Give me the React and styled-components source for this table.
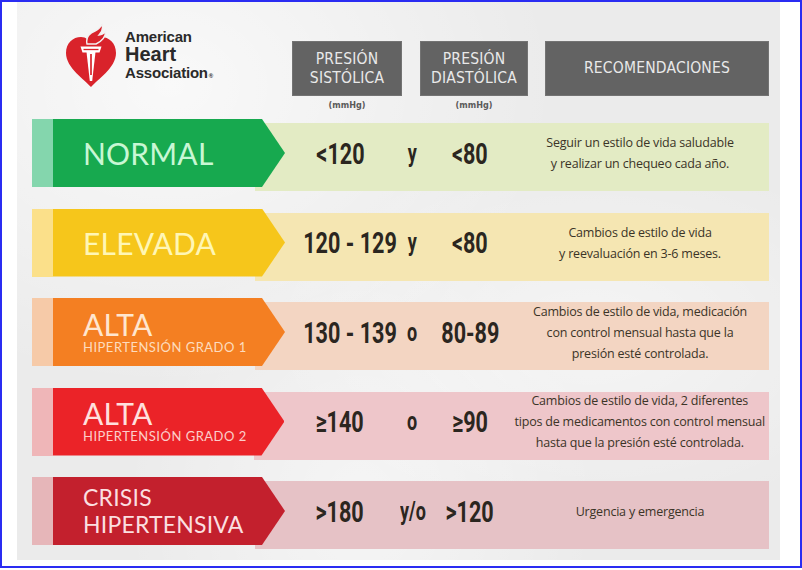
import React from 'react'
import styled, { createGlobalStyle } from 'styled-components';

const GlobalStyle = createGlobalStyle`
    html, body {
        margin: 0;
        padding: 0;
        background: #ffffff;
    }
    * {
        box-sizing: border-box;
    }
`;

const rows = [
    {
        title: ['NORMAL'], sub: null, size: 30,
        strip: '#84d6ad', main: '#17a94f', band: '#e3ebc4', ink: '#c8f7d4',
        sys: '<120', conn: 'y', dia: '<80',
        rec: ['Seguir un estilo de vida saludable', 'y realizar un chequeo cada año.'],
    },
    {
        title: ['ELEVADA'], sub: null, size: 30,
        strip: '#fbe08a', main: '#f6c61b', band: '#f5e6b2', ink: '#fff6b5',
        sys: '120 - 129', conn: 'y', dia: '<80',
        rec: ['Cambios de estilo de vida', 'y reevaluación en 3-6 meses.'],
    },
    {
        title: ['ALTA'], sub: 'HIPERTENSIÓN GRADO 1', size: 30,
        strip: '#f6caa8', main: '#f47f22', band: '#f3d5c2', ink: '#ffe6cf',
        sys: '130 - 139', conn: 'o', dia: '80-89',
        rec: ['Cambios de estilo de vida, medicación', 'con control mensual hasta que la', 'presión esté controlada.'],
    },
    {
        title: ['ALTA'], sub: 'HIPERTENSIÓN GRADO 2', size: 30,
        strip: '#efb6b8', main: '#eb2328', band: '#eec6ca', ink: '#ffe0dd',
        sys: '≥140', conn: 'o', dia: '≥90',
        rec: ['Cambios de estilo de vida, 2 diferentes', 'tipos de medicamentos con control mensual', 'hasta que la presión esté controlada.'],
    },
    {
        title: ['CRISIS', 'HIPERTENSIVA'], sub: null, size: 23,
        strip: '#e6b6b9', main: '#c3202d', band: '#e6c2c6', ink: '#fbdfe0',
        sys: '>180', conn: 'y/o', dia: '>120',
        rec: ['Urgencia y emergencia'],
    },
];

const HeartLogo = () => (
    <svg width="56" height="66" viewBox="0 0 56 66">
        <path d="M28 64 C22 57 3 45 3 30 C3 20 10 14 18 14 C23 14 26.5 17 28 21 C29.5 17 33 14 38 14 C46 14 53 20 53 30 C53 45 34 57 28 64 Z" fill="#d9232b" />
        <path d="M24 21 C22.5 14 27 10 32 8 C34.5 7 37 5 39 1.5 C40.5 6 38.5 9.5 36 12 C39 12 41 10.5 42.5 8 C43 14 38 18.5 33 21 Z" fill="#d9232b" stroke="#f2f2f2" strokeWidth="1.4" />
        <polygon points="17.5,23.5 38.5,23.5 36.5,29.5 19.5,29.5" fill="#ffffff" />
        <polygon points="23.5,29 32.5,29 29.2,58 26.8,58" fill="#ffffff" />
        <line x1="20.5" y1="26.5" x2="35.5" y2="26.5" stroke="#d9232b" strokeWidth="1.3" />
        <line x1="28" y1="31" x2="28" y2="52" stroke="#d9232b" strokeWidth="1.7" />
    </svg>
);

const App = () => {
    return (
        <>
            <GlobalStyle />
            <StyledFrame>
                <StyledPaper>
                    <StyledHeader>
                        <StyledLogo>
                            <HeartLogo />
                            <StyledLogoText>
                                <span>American</span>
                                <strong>Heart</strong>
                                <span>Association<sup>®</sup></span>
                            </StyledLogoText>
                        </StyledLogo>
                        <StyledHeadCol width={110}>
                            <StyledHeadBox>PRESIÓN<br />SISTÓLICA</StyledHeadBox>
                            <StyledUnit>(mmHg)</StyledUnit>
                        </StyledHeadCol>
                        <StyledHeadCol width={108} gap={18}>
                            <StyledHeadBox>PRESIÓN<br />DIASTÓLICA</StyledHeadBox>
                            <StyledUnit>(mmHg)</StyledUnit>
                        </StyledHeadCol>
                        <StyledHeadCol width={224} gap={17}>
                            <StyledHeadBox>RECOMENDACIONES</StyledHeadBox>
                        </StyledHeadCol>
                    </StyledHeader>
                    <StyledRows>
                        {rows.map((row, i) => (
                            <StyledRow key={i}>
                                <StyledStrip color={row.strip} />
                                <StyledArrow color={row.main} ink={row.ink}>
                                    {row.title.map((t) => (
                                        <StyledTitle key={t} size={row.size}>{t}</StyledTitle>
                                    ))}
                                    {row.sub && <StyledSub>{row.sub}</StyledSub>}
                                </StyledArrow>
                                <StyledBand color={row.band}>
                                    <StyledSys><StyledValue>{row.sys}</StyledValue></StyledSys>
                                    <StyledConn><StyledValue small>{row.conn}</StyledValue></StyledConn>
                                    <StyledDia><StyledValue>{row.dia}</StyledValue></StyledDia>
                                    <StyledRec>
                                        {row.rec.map((line) => (
                                            <div key={line}>{line}</div>
                                        ))}
                                    </StyledRec>
                                </StyledBand>
                            </StyledRow>
                        ))}
                    </StyledRows>
                </StyledPaper>
            </StyledFrame>
        </>
    )
}

const StyledFrame = styled.div`
    width: 802px;
    height: 568px;
    border: 2px solid #2a2cf2;
    background: #ffffff;
    padding: 0 20px 6px 15px;
    display: flex;
`;
const StyledPaper = styled.div`
    flex: 1;
    display: flex;
    flex-direction: column;
    padding-left: 15px;
    background:
        radial-gradient(ellipse at 20% 15%, rgba(255,255,255,0.7), transparent 45%),
        radial-gradient(ellipse at 75% 60%, rgba(255,255,255,0.5), transparent 40%),
        radial-gradient(ellipse at 45% 90%, rgba(255,255,255,0.5), transparent 40%),
        #ebebeb;
`;
const StyledHeader = styled.div`
    display: flex;
    align-items: flex-start;
    height: 109px;
`;
const StyledLogo = styled.div`
    width: 260px;
    display: flex;
    align-items: flex-start;
    padding-left: 31px;
    margin-top: 21px;
`;
const StyledLogoText = styled.div`
    display: flex;
    flex-direction: column;
    margin-left: 6px;
    padding-top: 5px;
    font-family: "Liberation Sans", Arial, sans-serif;
    font-weight: 700;
    color: #2a2a2a;
    >span{
        font-size: 15px;
        line-height: 17px;
        letter-spacing: -0.2px;
    }
    >strong{
        font-size: 20px;
        line-height: 19px;
    }
    sup{
        font-size: 6px;
        vertical-align: baseline;
        margin-left: 1px;
    }
`;
const StyledHeadCol = styled.div`
    width: ${(p) => p.width}px;
    margin-left: ${(p) => p.gap || 0}px;
    margin-top: 39px;
    display: flex;
    flex-direction: column;
    align-items: center;
`;
const StyledHeadBox = styled.div`
    width: 100%;
    height: 55px;
    background: #636363;
    border: 1px solid #737373;
    color: #e9e9e9;
    display: flex;
    align-items: center;
    justify-content: center;
    text-align: center;
    font-family: "DejaVu Sans Condensed", "DejaVu Sans", sans-serif;
    font-stretch: condensed;
    font-size: 15.5px;
    line-height: 19px;
    letter-spacing: 0.2px;
`;
const StyledUnit = styled.div`
    margin-top: 3px;
    font-family: "DejaVu Sans Condensed", "DejaVu Sans", sans-serif;
    font-stretch: condensed;
    font-weight: 700;
    font-size: 9px;
    line-height: 12px;
    color: #5a5a5a;
`;
const StyledRows = styled.div`
    margin-top: 8px;
    display: flex;
    flex-direction: column;
    gap: 21.5px;
`;
const StyledRow = styled.div`
    display: flex;
    width: 737px;
    height: 68px;
`;
const StyledStrip = styled.div`
    width: 21px;
    background: ${(p) => p.color};
`;
const StyledArrow = styled.div`
    position: relative;
    z-index: 1;
    width: 232px;
    height: 68px;
    padding-left: 30px;
    background: ${(p) => p.color};
    color: ${(p) => p.ink};
    clip-path: polygon(0 0, calc(100% - 23px) 0, 100% 50%, calc(100% - 23px) 100%, 0 100%);
    display: flex;
    flex-direction: column;
    justify-content: center;
    font-family: Lato, "Liberation Sans", sans-serif;
`;
const StyledTitle = styled.div`
    font-size: ${(p) => p.size}px;
    line-height: ${(p) => (p.size > 25 ? 30 : 27)}px;
    letter-spacing: 0.2px;
`;
const StyledSub = styled.div`
    font-size: 13px;
    line-height: 17px;
    letter-spacing: 0.5px;
    opacity: 0.9;
`;
const StyledBand = styled.div`
    flex: 1;
    margin-left: -30px;
    margin-top: 4px;
    height: 68px;
    padding: 0 0 8px 30px;
    background: ${(p) => p.color};
    display: flex;
    align-items: center;
    color: #2b2620;
`;
const StyledSys = styled.div`
    width: 110px;
    text-align: center;
`;
const StyledConn = styled.div`
    width: 35px;
    text-align: center;
`;
const StyledDia = styled.div`
    width: 80px;
    text-align: center;
`;
const StyledValue = styled.span`
    display: inline-block;
    transform: scaleX(0.72);
    font-family: Roboto, "Liberation Sans", sans-serif;
    font-weight: 700;
    font-size: ${(p) => (p.small ? 25 : 30)}px;
    white-space: nowrap;
    color: #2b2620;
`;
const StyledRec = styled.div`
    flex: 1;
    margin: 0 4px 0 5px;
    text-align: center;
    font-family: "Open Sans", sans-serif;
    font-size: 12.5px;
    line-height: 21px;
    letter-spacing: -0.2px;
    color: #3b3427;
    white-space: nowrap;
`;

export default App
